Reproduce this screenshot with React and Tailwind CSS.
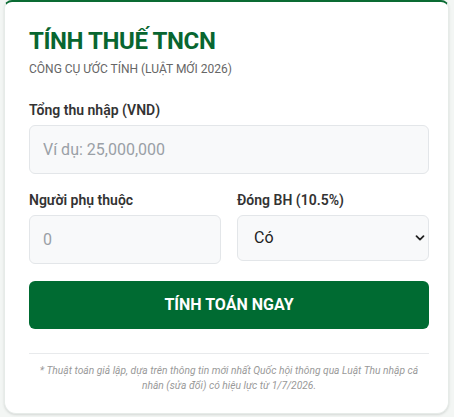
import React, { useState } from 'react';

const ChevronDown = () => (
  <svg width="10" height="10" viewBox="0 0 10 10" className="pointer-events-none absolute right-[4px] top-1/2 -translate-y-1/2">
    <path d="M1.5 3.2 L5 6.6 L8.5 3.2" fill="none" stroke="#222" strokeWidth="1.8" strokeLinecap="round" strokeLinejoin="round" />
  </svg>
);

const TaxCalculator = () => {
  const [income, setIncome] = useState('');
  const [dependents, setDependents] = useState('');
  const [insurance, setInsurance] = useState('yes');

  return (
    <div className="min-h-screen bg-[#f3f6f4] pl-1 pr-[5px] pb-1" style={{ fontFamily: 'Roboto, "Noto Sans", sans-serif' }}>
      <div className="bg-white border border-[#e6ebe8] border-t-2 border-t-[#0a6b33] rounded-b-xl rounded-t-lg shadow-sm pl-6 pr-[19px] pt-[23px] pb-[20px]">
        <h1 className="text-[24px] leading-[32px] font-bold text-[#086630] tracking-[-0.4px]">TÍNH THUẾ TNCN</h1>
        <p className="mt-[4px] text-[12px] leading-[16px] text-[#666] uppercase">Công cụ ước tính (Luật mới 2026)</p>

        <label className="block mt-[23px] text-[14px] leading-[20px] font-semibold text-[#333]">Tổng thu nhập (VND)</label>
        <input
          value={income}
          onChange={(e) => setIncome(e.target.value)}
          placeholder="Ví dụ: 25,000,000"
          className="mt-[5px] block w-full h-[49px] rounded-md border border-[#e3e6e9] bg-[#f8f9fa] px-[13px] text-[16px] text-[#333] placeholder:text-[#9aa0a6] outline-none"
        />

        <div className="mt-[16px] grid grid-cols-2 gap-4">
          <div>
            <label className="block text-[14px] leading-[20px] font-semibold text-[#333]">Người phụ thuộc</label>
            <input
              value={dependents}
              onChange={(e) => setDependents(e.target.value)}
              placeholder="0"
              className="mt-[5px] block w-full h-[49px] rounded-md border border-[#e3e6e9] bg-[#f8f9fa] px-[13px] text-[16px] text-[#333] placeholder:text-[#9aa0a6] outline-none"
            />
          </div>
          <div>
            <label className="block text-[14px] leading-[20px] font-semibold text-[#333]">Đóng BH (10.5%)</label>
            <div className="relative mt-[5px]">
              <select
                value={insurance}
                onChange={(e) => setInsurance(e.target.value)}
                className="block w-full h-[46px] appearance-none rounded-md border border-[#e3e6e9] bg-[#f8f9fa] pl-[16px] text-[16px] text-[#222] outline-none"
              >
                <option value="yes">Có</option>
                <option value="no">Không</option>
              </select>
              <ChevronDown />
            </div>
          </div>
        </div>

        <button className="mt-[17px] w-full h-[48px] rounded-md bg-[#006b32] text-white text-[16px] font-bold uppercase">
          Tính toán ngay
        </button>

        <div className="mt-[24px] border-t border-[#e8eaec] pt-[9px] px-1 text-center text-[10.25px] leading-[15px] italic text-[#999]">
          * Thuật toán giả lập, dựa trên thông tin mới nhất Quốc hội thông qua Luật Thu nhập cá nhân (sửa đổi) có hiệu lực từ 1/7/2026.
        </div>
      </div>
    </div>
  );
};

export default TaxCalculator;
